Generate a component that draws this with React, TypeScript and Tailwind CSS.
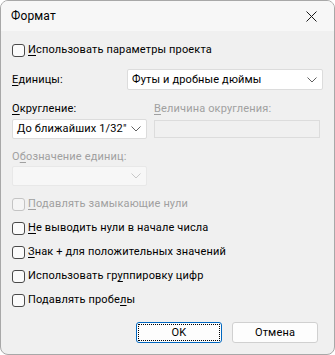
import React from 'react';

const Chevron = ({ disabled = false }: { disabled?: boolean }) => (
  <svg width="10" height="6" viewBox="0 0 10 6" className="shrink-0">
    <path d="M0.5 0.5 L5 5 L9.5 0.5" fill="none" stroke={disabled ? '#c8c8c8' : '#606060'} strokeWidth="1" />
  </svg>
);

const Check = ({ label, disabled = false }: { label: React.ReactNode; disabled?: boolean }) => (
  <div className="flex items-center h-[16px] gap-[3px]">
    <span
      className={`w-[13px] h-[13px] rounded-[3px] border ${disabled ? 'border-[#c4c4c4] bg-[#f5f5f5]' : 'border-[#4a4a4a] bg-[#fbfbfb]'}`}
    />
    <span className={`whitespace-nowrap ${disabled ? 'text-[#a0a0a0]' : 'text-black'}`}>{label}</span>
  </div>
);

const U = ({ children }: { children: React.ReactNode }) => (
  <span className="underline decoration-1 underline-offset-[2px]">{children}</span>
);

export default function App() {
  return (
    <div className="w-[335px] h-[355px] bg-white text-[11px] tracking-[0.15px] leading-[16px]" style={{ fontFamily: 'Roboto, "Noto Sans", sans-serif' }}>
      <div className="w-[335px] h-[355px] flex flex-col border border-[#a8a8a8] rounded-[8px] overflow-hidden bg-[#f0f0f0]">
        <div className="h-[30px] shrink-0 flex items-center justify-between pl-[10px] pr-[17px] bg-[#f7f7f7]">
          <span className="text-black text-[12px]">Формат</span>
          <svg width="11" height="11" viewBox="0 0 11 11">
            <path d="M0.5 0.5 L10.5 10.5 M10.5 0.5 L0.5 10.5" stroke="#1a1a1a" strokeWidth="1" />
          </svg>
        </div>

        <div className="flex-1 flex flex-col px-[11px]">
          <div className="mt-[11px]">
            <Check label={<><U>И</U>спользовать параметры проекта</>} />
          </div>

          <div className="mt-[11px] flex items-center justify-between">
            <span><U>Е</U>диницы:</span>
            <div className="w-[196px] h-[21px] bg-white border border-[#dcdcdc] rounded-[2px] flex items-center justify-between pl-[4px] pr-[5px]">
              <span className="whitespace-nowrap">Футы и дробные дюймы</span>
              <Chevron />
            </div>
          </div>

          <div className="mt-[11px] flex">
            <div className="w-[135px] flex flex-col">
              <span><U>О</U>кругление:</span>
              <div className="mt-[2px] h-[20px] bg-white border border-[#dcdcdc] rounded-[2px] flex items-center justify-between pl-[4px] pr-[5px]">
                <span className="whitespace-nowrap">До ближайших 1/32"</span>
                <Chevron />
              </div>
            </div>
            <div className="ml-[7px] flex-1 flex flex-col pr-[3px]">
              <span className="text-[#a0a0a0] whitespace-nowrap"><U>В</U>еличина округления:</span>
              <div className="mt-[3px] h-[18px] bg-[#f0f0f0] border border-[#dcdcdc]" />
            </div>
          </div>

          <div className="mt-[10px] flex flex-col w-[135px]">
            <span className="text-[#a0a0a0] whitespace-nowrap">О<U>б</U>означение единиц:</span>
            <div className="mt-[1px] h-[20px] bg-[#f7f7f7] border border-[#e8e8e8] rounded-[2px] flex items-center justify-end pr-[5px]">
              <Chevron disabled />
            </div>
          </div>

          <div className="mt-[10px] flex flex-col gap-[8px]">
            <Check disabled label={<><U>П</U>одавлять замыкающие нули</>} />
            <Check label={<><U>Н</U>е выводить нули в начале числа</>} />
            <Check label={<><U>З</U>нак + для положительных значений</>} />
            <Check label={<>Использовать гр<U>у</U>ппировку цифр</>} />
            <Check label={<>Подавлять пробе<U>л</U>ы</>} />
          </div>

          <div className="mt-[14px] flex justify-end gap-[10px] pr-[5px]">
            <button className="w-[86px] h-[21px] rounded-[3px] border border-[#0067c0] bg-[#fdfdfd] p-[1px]">
              <span className="flex items-center justify-center w-full h-full border border-dotted border-black">OK</span>
            </button>
            <button className="w-[86px] h-[21px] rounded-[3px] border border-[#d0d0d0] bg-[#fdfdfd]">Отмена</button>
          </div>
        </div>
      </div>
    </div>
  );
}
